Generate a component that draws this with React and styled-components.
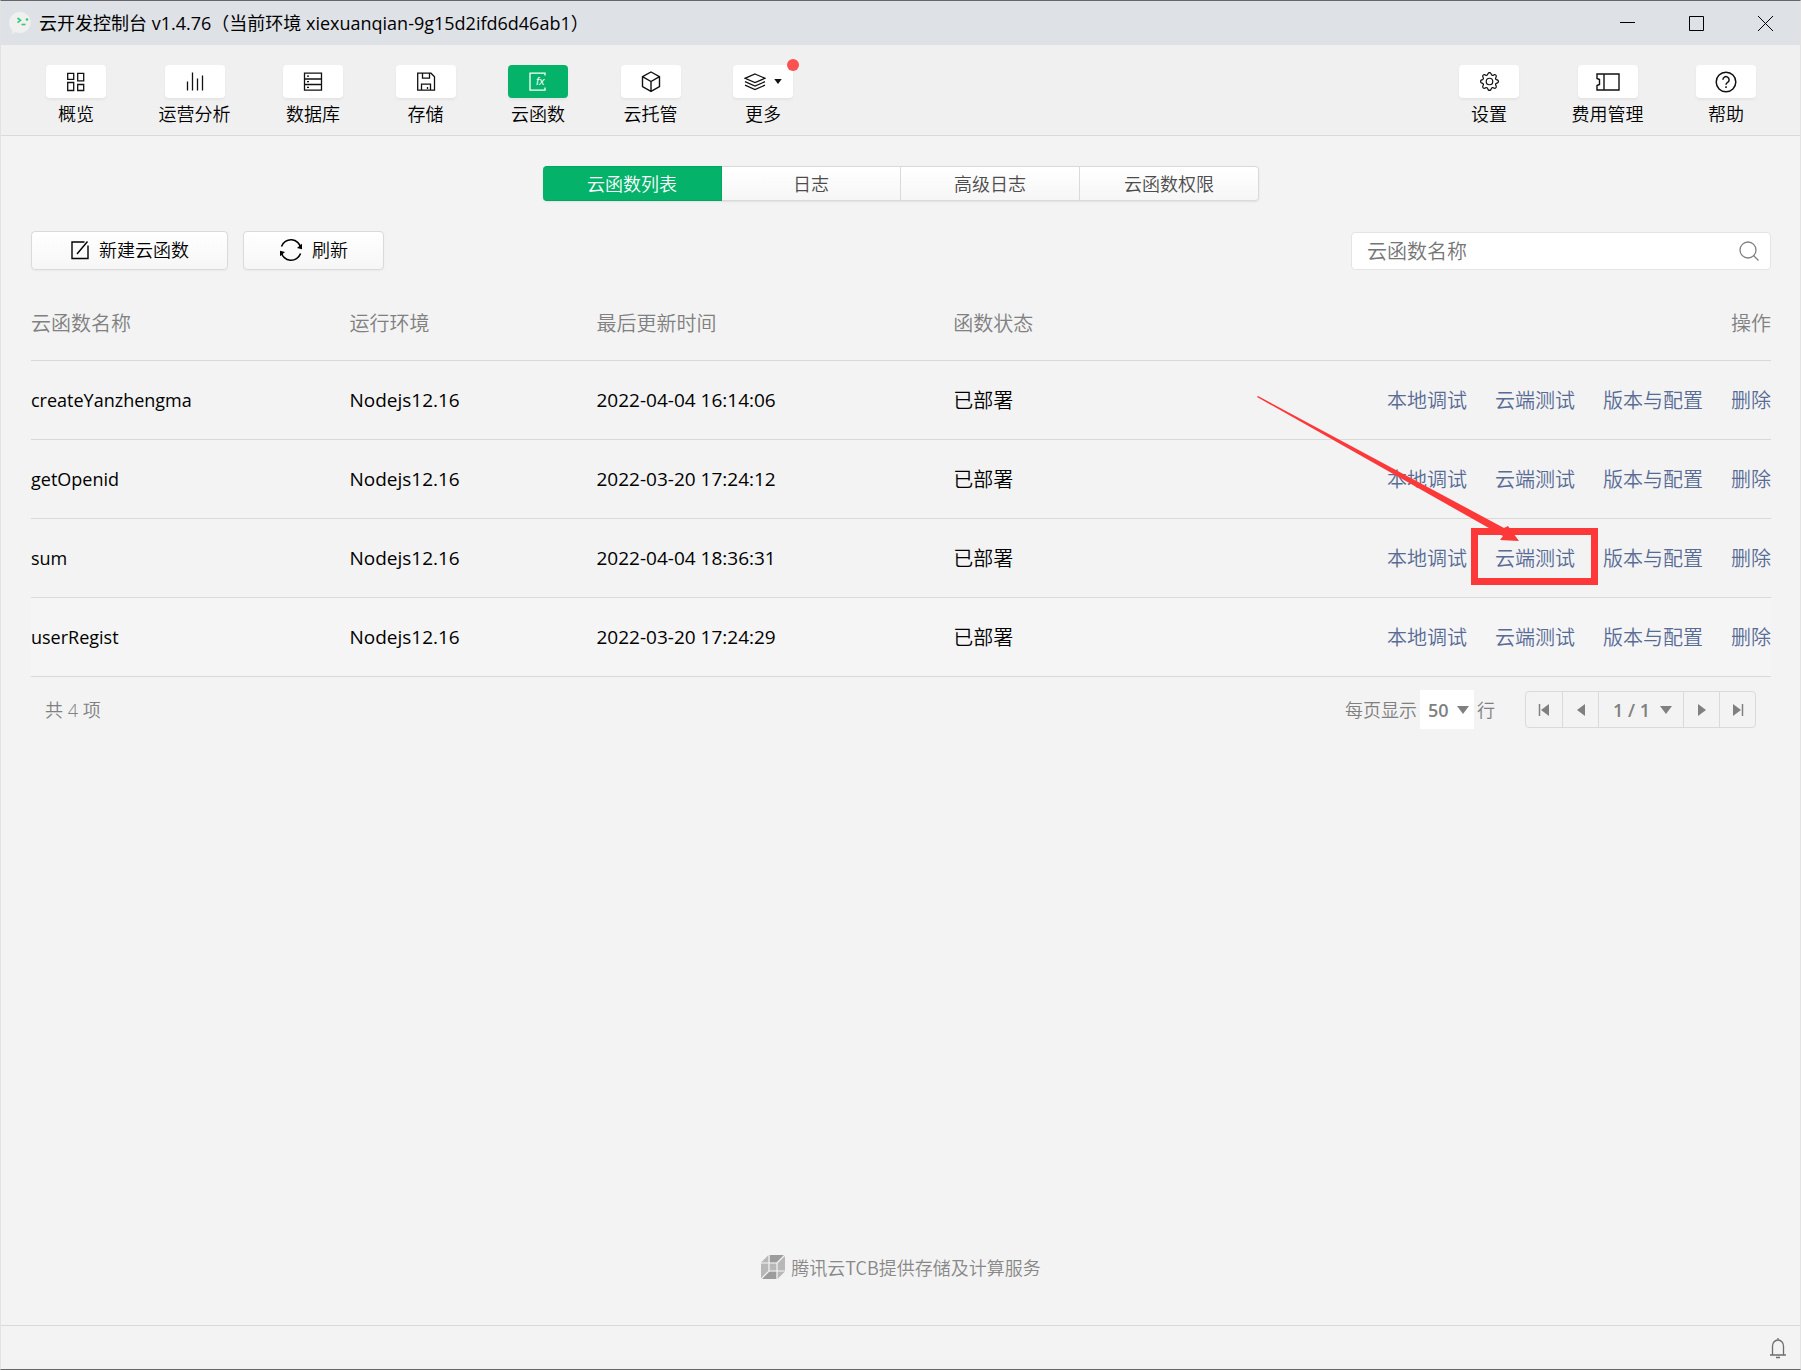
import styled, { createGlobalStyle, css } from "styled-components";
import { BsGear } from "react-icons/bs";

const GlobalStyle = createGlobalStyle`
  * {
    box-sizing: border-box;
  }

  body {
    margin: 0;
    background: #f3f3f3;
    color: #000;
    font-family: "Open Sans", "Noto Sans CJK SC", sans-serif;
    font-size: 18px;
    font-weight: 400;
  }

  button, input, select {
    font: inherit;
    color: inherit;
    margin: 0;
  }
`;

const Window = styled.div`
  min-height: 100vh;
  display: flex;
  flex-direction: column;
  border: 1px solid #e2e2e2;
  border-top-color: #666;
  border-bottom-color: #666;
`;

const TitleBar = styled.header`
  height: 44px;
  display: flex;
  align-items: center;
  background: #dee1e6;
  padding-left: 7px;
`;

const TitleText = styled.h1`
  flex: 1;
  margin: 0 0 0 7px;
  font-size: 18px;
  font-weight: 400;
  line-height: 24px;
`;

const WindowButton = styled.button`
  width: 69px;
  height: 44px;
  padding: 0;
  border: 0;
  background: none;
  display: flex;
  align-items: center;
  justify-content: center;
`;

const Toolbar = styled.div`
  height: 91px;
  padding: 20px 44px 0 45px;
  display: flex;
  justify-content: space-between;
  align-items: flex-start;
  background: #f0f0f0;
  border-bottom: 1px solid #d9d9d9;
`;

const ToolGroup = styled.nav`
  display: flex;
  justify-content: space-between;
  flex: 0 1 ${(props) => props.$basis};
`;

const ToolItem = styled.button`
  padding: 0;
  border: 0;
  background: none;
  display: flex;
  flex-direction: column;
  align-items: center;
  gap: 4px;
  line-height: 24px;
  font-weight: 350;
  white-space: nowrap;
`;

const ToolIcon = styled.span`
  position: relative;
  width: 60px;
  height: 33px;
  border-radius: 4px;
  display: flex;
  align-items: center;
  justify-content: center;
  gap: 8px;
  background: ${(props) => (props.$active ? "#04b26a" : "#fff")};
  color: ${(props) => (props.$active ? "#fff" : "#111")};
  box-shadow: 0 2px 3px rgba(0, 0, 0, 0.05);
`;

const RedDot = styled.i`
  position: absolute;
  top: -6px;
  right: -6px;
  width: 12px;
  height: 12px;
  border-radius: 50%;
  background: #fa5151;
`;

const Main = styled.main`
  flex: 1;
  padding: 30px 29px 0 30px;
  display: flex;
  flex-direction: column;
`;

const Tabs = styled.div`
  align-self: center;
  width: 40%;
  min-width: 716px;
  height: 35px;
  display: grid;
  grid-template-columns: repeat(4, 1fr);
  border-radius: 4px;
  box-shadow: 0 1px 2px rgba(0, 0, 0, 0.08);
`;

const raised = css`
  border: 1px solid #dadada;
  background: linear-gradient(#fff, #f6f6f6);
`;

const Tab = styled.button`
  ${raised}
  padding: 0;
  border-left-width: 0;
  color: #4c4c4c;
  font-weight: 350;
  line-height: 24px;

  &:first-child {
    border-radius: 4px 0 0 4px;
  }
  &:last-child {
    border-radius: 0 4px 4px 0;
  }
  ${(props) =>
    props.$active &&
    css`
      background: #04b26a;
      border-color: #04a562;
      color: #fff;
    `}
`;

const ActionBar = styled.div`
  margin-top: 30px;
  display: flex;
  align-items: center;
  gap: 15px;
`;

const ActionButton = styled.button`
  ${raised}
  height: 39px;
  padding: 0 ${(props) => props.$pad} 2px;
  border-radius: 4px;
  display: flex;
  align-items: center;
  gap: 9px;
  font-weight: 350;
  line-height: 24px;
  box-shadow: 0 1px 2px rgba(0, 0, 0, 0.04);
`;

const SearchBox = styled.label`
  margin-left: auto;
  width: 420px;
  height: 38px;
  padding: 0 11px 0 15px;
  display: flex;
  align-items: center;
  background: #fff;
  border: 1px solid #e4e4e4;
  border-radius: 4px;
  color: #808080;

  input {
    flex: 1;
    min-width: 0;
    padding: 2px 0 0;
    border: 0;
    outline: none;
    background: none;
    font-size: 20px;
    font-weight: 350;
    line-height: 28px;
  }
  input::placeholder {
    color: #757575;
    opacity: 1;
  }
`;

const Table = styled.table`
  width: 100%;
  margin-top: 16px;
  table-layout: fixed;
  border-collapse: separate;
  border-spacing: 0;
  font-size: 19px;
  line-height: 28px;

  th, td {
    padding: 0;
    text-align: left;
    border-bottom: 1px solid #d9d9d9;
  }
  th {
    height: 75px;
    padding-top: 2px;
    color: #808080;
    font-size: 20px;
    font-weight: 350;
  }
  td {
    height: 79px;
  }
  td:first-child {
    font-size: 18px;
  }
  th:last-child {
    text-align: right;
  }
  tbody tr:last-child {
    background: #f5f5f5;
  }
`;

const StatusCell = styled.td`
  && {
    padding-top: 2px;
    font-size: 20px;
    font-weight: 350;
  }
`;

const ActionCell = styled.td`
  && {
    padding-top: 2px;
  }
`;

const RowActions = styled.div`
  display: flex;
  justify-content: flex-end;
  gap: 28px;
  font-size: 20px;
  font-weight: 350;
  white-space: nowrap;

  a {
    color: #576b95;
    text-decoration: none;
  }
`;

const Marked = styled.span`
  position: relative;
`;

const MarkBox = styled.i`
  position: absolute;
  top: -17px;
  left: -24px;
  width: 127px;
  height: 57px;
  border: 7px solid #fc3838;
  pointer-events: none;
`;

const MarkArrow = styled.svg`
  position: absolute;
  top: -149px;
  left: -238px;
  pointer-events: none;
`;

const Pagination = styled.div`
  height: 65px;
  padding: 0 15px 0 14px;
  display: flex;
  align-items: center;
  color: #808080;
  font-weight: 350;
  line-height: 24px;
`;

const PageSize = styled.label`
  margin-left: auto;
  margin-right: 30px;
  display: flex;
  align-items: center;
  gap: 3px;
`;

const SelectWrap = styled.span`
  position: relative;
  display: flex;

  select {
    width: ${(props) => props.$width};
    height: ${(props) => props.$height};
    padding: 0 0 0 ${(props) => props.$indent};
    appearance: none;
    border: 0;
    border-radius: 0;
    outline: none;
    background: ${(props) => props.$fill};
    font-size: 18px;
    font-weight: 600;
  }
  svg {
    position: absolute;
    right: ${(props) => props.$arrow};
    top: 50%;
    margin-top: -4px;
    pointer-events: none;
  }
`;

const Pager = styled.div`
  height: 37px;
  display: flex;
  border: 1px solid #dadada;
  border-radius: 4px;

  && > * + * {
    border-left: 1px solid #dadada;
  }
`;

const PagerButton = styled.button`
  width: 36px;
  padding: 0;
  border: 0;
  background: none;
  display: flex;
  align-items: center;
  justify-content: center;
`;

const Provider = styled.footer`
  margin: auto auto 45px;
  display: flex;
  align-items: center;
  gap: 6px;
  color: #888;
  font-family: "Noto Sans CJK SC", sans-serif;
  font-weight: 350;
  line-height: 26px;
`;

const StatusBar = styled.div`
  height: 44px;
  padding-right: 14px;
  display: flex;
  align-items: center;
  justify-content: flex-end;
  border-top: 1px solid #d9d9d9;
`;

const BellButton = styled.button`
  padding: 0;
  border: 0;
  background: none;
  color: #6e6e6e;
  display: flex;
`;

const Icon = ({ w = 20, h = 20, sw = 1.3, children }) => (
  <svg width={w} height={h} viewBox={`0 0 ${w} ${h}`} fill="none" stroke="currentColor" strokeWidth={sw}>
    {children}
  </svg>
);

const Caret = ({ w = 12, h = 8 }) => (
  <svg width={w} height={h} viewBox="0 0 12 8" fill="currentColor">
    <path d="M0 0h12L6 8z" />
  </svg>
);

const LogoIcon = () => (
  <svg width="24" height="24" viewBox="0 0 24 24">
    <path d="M12 1a11 10.500 0 1 1-5 20l-3 2 .3-3.600A10.800 10.800 0 0 1 12 1z" fill="#f0f0f0" />
    <path d="M9.500 7l3 2.300-3 2.300" fill="none" stroke="#2fcb75" strokeWidth="1.600" />
    <circle cx="19" cy="8.500" r="1.300" fill="#2fcb75" />
    <path d="M13.500 13.500h4" stroke="#2fcb75" strokeWidth="1.600" />
  </svg>
);

const OverviewIcon = () => (
  <Icon>
    <path d="M1.700 1.300h6v6h-6zM11.700 1.300h6v7.500h-6zM1.700 10.500h6v8h-6zM11.700 12.500h6v6h-6z" />
  </Icon>
);

const ChartIcon = () => (
  <Icon>
    <path d="M2.500 9.500v9M7.500 .5v18M12.500 6.500v12M17.500 3.500v15" />
  </Icon>
);

const DatabaseIcon = () => (
  <Icon>
    <path d="M1.500 1.200h17v17h-17zM1.500 7h17M1.500 12.500h17M4 4.200h2M4 9.700h2M4 15.300h2" />
  </Icon>
);

const StorageIcon = () => (
  <Icon>
    <path d="M1.700 1.200h13.300l3.500 3.500v13.500H1.700zM6.500 1.200v5h7v-5M5.500 18.200v-6h9v6M11.500 15v2" />
  </Icon>
);

const FunctionIcon = () => (
  <Icon>
    <path d="M17 3.500V1.200H2v17h15V15.500" />
    <text x="8" y="13" fill="currentColor" stroke="none" fontSize="11" fontStyle="italic" fontWeight="400" fontFamily="Liberation Sans">fx</text>
  </Icon>
);

const CubeIcon = () => (
  <Icon w={20} h={22} sw={1.4}>
    <path d="M10 1l8.500 4.700v10L10 20.400 1.500 15.700V5.700zM1.500 5.700l8.500 4.800L18.500 5.700M10 10.500v9.900" />
  </Icon>
);

const LayersIcon = () => (
  <Icon w={22} h={18}>
    <path d="M11 1l10 4.300-10 4.300L1 5.300zM1 8.700L11 13l10-4.300M1 12.200l10 4.300 10-4.300" />
  </Icon>
);

const TicketIcon = () => (
  <Icon w={24} h={18} sw={1.4}>
    <path d="M1 1h22v16H1v-4.500l2.500-1V6.500L1 5.500zM8 1v16" />
  </Icon>
);

const HelpIcon = () => (
  <Icon w={22} h={22} sw={1.5}>
    <circle cx="11" cy="11" r="9.800" />
    <path d="M7.900 8.800a3.100 3.100 0 1 1 4.700 2.600c-1.100.7-1.600 1.200-1.600 2.400M11 15.200v1.700" />
  </Icon>
);

const CreateIcon = () => (
  <Icon w={20} h={20} sw={1.4}>
    <path d="M14.500 2H2v16.500h16V5.500M7 14L17.500 1.500" />
  </Icon>
);

const RefreshIcon = () => (
  <Icon w={24} h={24} sw={1.600}>
    <path d="M2.500 8.500a10 10 0 0 1 19.300 1.500M21.500 15.500a10 10 0 0 1-19.300-1.500" />
    <path d="M23 5.800v5.400l-5-1.200zM1 18.200v-5.400l5 1.200z" fill="currentColor" stroke="none" />
  </Icon>
);

const SearchIcon = () => (
  <Icon w={20} h={20}>
    <circle cx="9" cy="9" r="8" />
    <path d="M14.500 14.500l5 5" />
  </Icon>
);

const CloudIcon = () => (
  <svg width="24" height="24" viewBox="0 0 24 24">
    <path d="M7.500 0H22.500L24 1.500V16.500L16.500 24H1.500L0 22.500V7.500z" fill="#b8b8b8" />
    <path d="M9 0h13.500l-7 7.500H9zM8 16.500h7.500V24H1.500z" fill="#9c9c9c" />
    <path d="M0 8h16v16M8 0v16h16M0 24L8 16M16 8L24 0" fill="none" stroke="#f3f3f3" strokeWidth="1.200" />
  </svg>
);

const BellIcon = () => (
  <Icon w={16} h={22}>
    <path d="M2.500 17.500V9a5.500 6 0 0 1 11 0v8.500M0 18h16M8 1v2M6 20.500h4" />
  </Icon>
);

const mainTools = [
  { label: "概览", icon: <OverviewIcon /> },
  { label: "运营分析", icon: <ChartIcon /> },
  { label: "数据库", icon: <DatabaseIcon /> },
  { label: "存储", icon: <StorageIcon /> },
  { label: "云函数", icon: <FunctionIcon />, active: true },
  { label: "云托管", icon: <CubeIcon /> },
  { label: "更多", icon: <><LayersIcon /><Caret w={8} h={5} /></>, dot: true },
];

const sideTools = [
  { label: "设置", icon: <BsGear size={19} /> },
  { label: "费用管理", icon: <TicketIcon /> },
  { label: "帮助", icon: <HelpIcon /> },
];

const tabs = ["云函数列表", "日志", "高级日志", "云函数权限"];

const functions = [
  { name: "createYanzhengma", time: "2022-04-04 16:14:06" },
  { name: "getOpenid", time: "2022-03-20 17:24:12" },
  { name: "sum", time: "2022-04-04 18:36:31", marked: true },
  { name: "userRegist", time: "2022-03-20 17:24:29" },
];

const Tools = ({ items, basis }) => (
  <ToolGroup $basis={basis}>
    {items.map((item) => (
      <ToolItem key={item.label}>
        <ToolIcon $active={item.active}>
          {item.icon}
          {item.dot && <RedDot />}
        </ToolIcon>
        {item.label}
      </ToolItem>
    ))}
  </ToolGroup>
);

const FunctionRow = ({ name, time, marked }) => (
  <tr>
    <td>{name}</td>
    <td>Nodejs12.16</td>
    <td>{time}</td>
    <StatusCell>已部署</StatusCell>
    <ActionCell>
      <RowActions>
        <a href="#debug">本地调试</a>
        <Marked>
          <a href="#test">云端测试</a>
          {marked && (
            <>
              <MarkBox />
              <MarkArrow width="264" height="148" viewBox="0 0 264 148" fill="#fc3838">
                <path d="M0 1L1 0L247 132l4-2 11 15-19-1 3-4z" />
              </MarkArrow>
            </>
          )}
        </Marked>
        <a href="#config">版本与配置</a>
        <a href="#delete">删除</a>
      </RowActions>
    </ActionCell>
  </tr>
);

const App = () => {
  return (
    <>
      <GlobalStyle />
      <Window>
        <TitleBar>
          <LogoIcon />
          <TitleText>云开发控制台 v1.4.76（当前环境 xiexuanqian-9g15d2ifd6d46ab1）</TitleText>
          <WindowButton aria-label="最小化">
            <Icon w={15} h={15} sw={1}><path d="M0 6.500h15" /></Icon>
          </WindowButton>
          <WindowButton aria-label="最大化">
            <Icon w={15} h={15} sw={1}><path d="M.5.5h14v14H.5z" /></Icon>
          </WindowButton>
          <WindowButton aria-label="关闭">
            <Icon w={15} h={15} sw={1}><path d="M0 0l15 15M15 0L0 15" /></Icon>
          </WindowButton>
        </TitleBar>

        <Toolbar>
          <Tools items={mainTools} basis="747px" />
          <Tools items={sideTools} basis="297px" />
        </Toolbar>

        <Main>
          <Tabs>
            {tabs.map((tab, i) => (
              <Tab key={tab} $active={i === 0}>{tab}</Tab>
            ))}
          </Tabs>

          <ActionBar>
            <ActionButton $pad="38px"><CreateIcon />新建云函数</ActionButton>
            <ActionButton $pad="35px"><RefreshIcon />刷新</ActionButton>
            <SearchBox>
              <input type="text" placeholder="云函数名称" aria-label="云函数名称" />
              <SearchIcon />
            </SearchBox>
          </ActionBar>

          <Table>
            <colgroup>
              <col width="18.3%" />
              <col width="14.2%" />
              <col width="20.5%" />
              <col />
              <col width="26%" />
            </colgroup>
            <thead>
              <tr>
                <th>云函数名称</th>
                <th>运行环境</th>
                <th>最后更新时间</th>
                <th>函数状态</th>
                <th>操作</th>
              </tr>
            </thead>
            <tbody>
              {functions.map((fn) => (
                <FunctionRow key={fn.name} {...fn} />
              ))}
            </tbody>
          </Table>

          <Pagination>
            <span>共 4 项</span>
            <PageSize>
              每页显示
              <SelectWrap $width="54px" $height="39px" $indent="8px" $arrow="5px" $fill="#fff">
                <select aria-label="每页显示"><option>50</option></select>
                <Caret />
              </SelectWrap>
              行
            </PageSize>
            <Pager>
              <PagerButton aria-label="首页">
                <Icon w={12} h={12} sw={1.500}><path d="M1.500 0v12" /><path d="M11 0v12L3 6z" fill="currentColor" stroke="none" /></Icon>
              </PagerButton>
              <PagerButton aria-label="上一页">
                <Icon w={8} h={12}><path d="M8 0v12L0 6z" fill="currentColor" stroke="none" /></Icon>
              </PagerButton>
              <SelectWrap $width="84px" $height="35px" $indent="14px" $arrow="11px" $fill="none">
                <select aria-label="页码"><option>1 / 1</option></select>
                <Caret />
              </SelectWrap>
              <PagerButton aria-label="下一页">
                <Icon w={8} h={12}><path d="M0 0v12l8-6z" fill="currentColor" stroke="none" /></Icon>
              </PagerButton>
              <PagerButton aria-label="末页">
                <Icon w={12} h={12} sw={1.500}><path d="M10.500 0v12" /><path d="M1 0v12l8-6z" fill="currentColor" stroke="none" /></Icon>
              </PagerButton>
            </Pager>
          </Pagination>

          <Provider>
            <CloudIcon />
            腾讯云TCB提供存储及计算服务
          </Provider>
        </Main>

        <StatusBar>
          <BellButton aria-label="通知"><BellIcon /></BellButton>
        </StatusBar>
      </Window>
    </>
  );
};

export default App;
